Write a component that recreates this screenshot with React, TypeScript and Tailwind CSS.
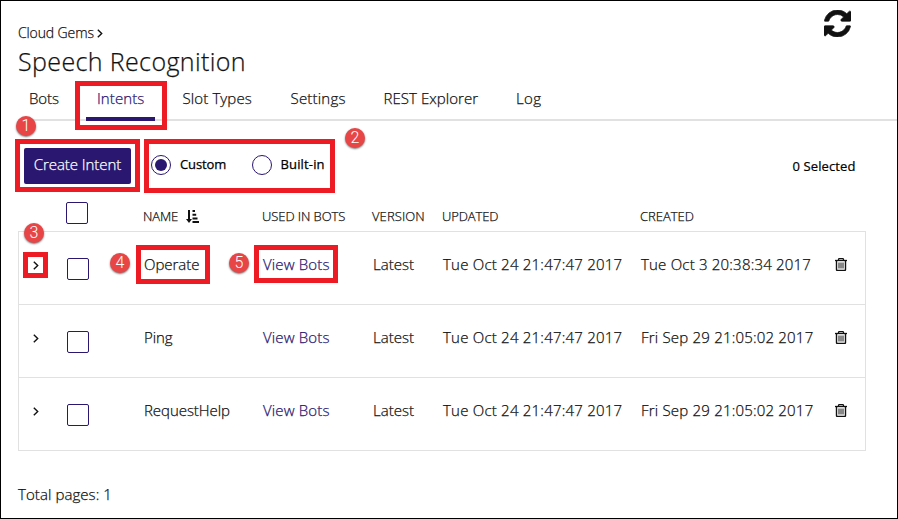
import { ReactNode } from "react";

const tabs = [
  { label: "Bots", box: "w-[68px] pl-[11px] tracking-[-0.1px]", active: false },
  { label: "Intents", box: "w-[69px] pl-[11px] tracking-[0.08px]", active: true },
  { label: "Slot Types", box: "w-[108px] pl-[27.500px] tracking-[0.12px]", active: false },
  { label: "Settings", box: "w-[93px] pl-[27.500px] tracking-[0.2px]", active: false },
  { label: "REST Explorer", box: "w-[133px] pl-[27.500px] tracking-[0.06px]", active: false },
  { label: "Log", box: "w-[60px] pl-[27px] tracking-[0.4px]", active: false },
];

const intents = [
  { name: "Operate", updated: "Tue Oct 24 21:47:47 2017", created: "Tue Oct 3 20:38:34 2017" },
  { name: "Ping", updated: "Tue Oct 24 21:47:47 2017", created: "Fri Sep 29 21:05:02 2017" },
  { name: "RequestHelp", updated: "Tue Oct 24 21:47:47 2017", created: "Fri Sep 29 21:05:02 2017" },
];

const columns = "grid grid-cols-[48px_76px_119px_110px_70px_198px_194px_1fr]";

function Chevron({ className }: { className: string }) {
  return (
    <svg className={className} viewBox="0 0 6 9" fill="none" stroke="#111" strokeWidth="1.4">
      <path d="M0.8 0.7 4.7 4.5 0.8 8.3" />
    </svg>
  );
}

function Refresh() {
  return (
    <svg className="h-[27px] w-[27px]" viewBox="0 0 1536 1536" fill="#111" stroke="#111" strokeWidth="40">
      <path d="M1511 928q0 5-1 7-64 268-268 434.500T764 1536q-146 0-282.500-55T238 1324l-129 129q-19 19-45 19t-45-19-19-45V960q0-26 19-45t45-19h448q26 0 45 19t19 45-19 45l-137 137q71 66 161 102t187 36q134 0 250-65t186-179q11-17 53-117 8-23 30-23h192q13 0 22.500 9.500t9.500 22.500zm25-800v448q0 26-19 45t-45 19h-448q-26 0-45-19t-19-45 19-45l138-138Q969 256 768 256q-134 0-250 65T332 500q-11 17-53 117-8 23-30 23H50q-13 0-22.500-9.500T18 608v-7q65-268 270-434.500T768 0q146 0 284 55.500T1297 212l130-129q19-19 45-19t45 19 19 45z" />
    </svg>
  );
}

function SortIcon() {
  return (
    <svg className="ml-[8px] h-[13px] w-[13px]" viewBox="0 0 13 13" fill="#111">
      <path d="M2 0h2v9h2L3 13 0 9h2z" />
      <path d="M6.500 0h2.500v2H6.500zM6.500 3.700h3.700v2H6.500zM6.500 7.400h5v2h-5zM6.500 11h6.500v2H6.500z" />
    </svg>
  );
}

function Trash() {
  return (
    <svg className="mt-[26px] ml-[1px] h-[13px] w-[12px]" viewBox="0 0 12 13" fill="none" stroke="#111">
      <path d="M0 2.500h12" strokeWidth="1.300" />
      <path d="M3.500 2.500V1.500Q3.500 0.600 4.500 0.600h3Q8.500 0.600 8.500 1.500v1" strokeWidth="1.300" />
      <path d="M1.500 2.500v9q0 1 1 1h7q1 0 1-1v-9" strokeWidth="1.400" />
      <path d="M4 4.500v6M6 4.500v6M8 4.500v6" />
    </svg>
  );
}

function Checkbox({ className }: { className: string }) {
  return <div className={`h-[22px] w-[22px] rounded-[2px] border border-[#2a1770] ${className}`} />;
}

function Highlight({ className }: { className: string }) {
  return <div className={`absolute border-[5px] border-[#ed1c24] ${className}`} />;
}

function Badge({ className, children }: { className: string; children: ReactNode }) {
  return (
    <div
      className={`absolute flex h-[20px] w-[20px] items-center justify-center rounded-full bg-[#e84547] font-['Roboto',sans-serif] text-[16px] leading-none text-white shadow-[0_1px_2px_rgba(0,0,0,0.55)] [-webkit-text-stroke:0] ${className}`}
    >
      {children}
    </div>
  );
}

export default function App() {
  return (
    <div className="relative h-[519px] w-[898px] overflow-hidden border border-black bg-white pl-[17px] font-['Open_Sans',sans-serif] text-[15px] font-light whitespace-nowrap text-[#111] [-webkit-text-stroke:0.25px]">
      <header className="flex h-[79px] justify-between pr-[46px]">
        <div>
          <div className="flex items-center pt-[22px] text-[14px] leading-[20px] tracking-[-0.12px]">
            Cloud Gems
            <Chevron className="mt-px ml-[3px] h-[9px] w-[6px]" />
          </div>
          <h1 className="-mt-px text-[25px] leading-[38px] tracking-[0.38px]">Speech Recognition</h1>
        </div>
        <div className="pt-[9px]">
          <Refresh />
        </div>
      </header>

      <nav className="flex h-[41px] border-b-2 border-[#e1e1e1]">
        {tabs.map((t) => (
          <div
            key={t.label}
            className={`h-[41px] pt-[6px] leading-[24px] ${t.box} ${t.active ? "border-b-4 border-[#2a1770] text-[#2a1770]" : ""}`}
          >
            {t.label}
          </div>
        ))}
      </nav>

      <div className="flex h-[81px] pt-[27px]">
        <button className="ml-[6px] h-[36px] w-[107px] rounded-[2px] bg-[#2a1770] pb-[3px] tracking-[-0.05px] text-white">
          Create Intent
        </button>
        <div className="flex h-[36px] items-center pb-[2px] pl-[20px] text-[13px] font-medium text-black [-webkit-text-stroke:0.25px]">
          <span className="flex h-[20px] w-[20px] items-center justify-center rounded-full border border-[#2a1770]">
            <span className="h-[12px] w-[12px] rounded-full bg-[#2a1770]" />
          </span>
          <span className="w-[81px] pl-[9px] tracking-[-0.1px]">Custom</span>
          <span className="h-[20px] w-[20px] rounded-full border border-[#2a1770]" />
          <span className="pl-[8.500px] tracking-[0.15px]">Built-in</span>
        </div>
        <span className="mt-[8px] ml-auto h-[20px] pr-[41.500px] text-[13px] leading-[20px] font-medium tracking-[0.1px] text-black [-webkit-text-stroke:0.2px]">
          0 Selected
        </span>
      </div>

      <div className={`${columns} h-[29px] w-[848px] text-[13px] leading-[20px]`}>
        <span />
        <Checkbox className="" />
        <span className="mt-[4px] flex h-[20px] items-center self-start pl-px tracking-[-0.1px]">
          NAME
          <SortIcon />
        </span>
        <span className="pt-[4px] pl-px tracking-[-0.08px]">USED IN BOTS</span>
        <span className="pt-[4px] pl-px tracking-[0.1px]">VERSION</span>
        <span className="pt-[4px] pl-px tracking-[-0.1px]">UPDATED</span>
        <span className="pt-[4px] pl-px">CREATED</span>
      </div>

      <div className="w-[848px] border-x border-t border-[#e1e1e1]">
        {intents.map((r) => (
          <div key={r.name} className={`${columns} h-[73px] border-b border-[#e1e1e1] leading-[24px]`}>
            <Chevron className="mt-[28.500px] ml-[13.500px] h-[9px] w-[6px]" />
            <Checkbox className="mt-[26px]" />
            <span className="pt-[20px] pl-px tracking-[-0.05px]">{r.name}</span>
            <span className="pt-[20px] pl-px tracking-[0.15px] text-[#2a1770]">View Bots</span>
            <span className="pt-[20px] pl-px">Latest</span>
            <span className="pt-[20px] pl-px tracking-[0.22px]">{r.updated}</span>
            <span className="pt-[20px] pl-px tracking-[0.2px]">{r.created}</span>
            <Trash />
          </div>
        ))}
      </div>

      <footer className="pt-[31px] leading-[24px] tracking-[0.08px]">Total pages: 1</footer>

      <Highlight className="top-[80px] left-[74px] h-[49px] w-[92px]" />
      <Highlight className="top-[138px] left-[14px] h-[53px] w-[125px]" />
      <Highlight className="top-[138px] left-[143px] h-[54px] w-[191px]" />
      <Highlight className="top-[251px] left-[22px] h-[26px] w-[25px]" />
      <Highlight className="top-[244px] left-[135px] h-[39px] w-[74px]" />
      <Highlight className="top-[244px] left-[253px] h-[38px] w-[84px]" />
      <Badge className="top-[115px] left-[15px]">1</Badge>
      <Badge className="top-[127px] left-[344px]">2</Badge>
      <Badge className="top-[222px] left-[23px]">3</Badge>
      <Badge className="top-[252px] left-[109px]">4</Badge>
      <Badge className="top-[252px] left-[228px]">5</Badge>
    </div>
  );
}
